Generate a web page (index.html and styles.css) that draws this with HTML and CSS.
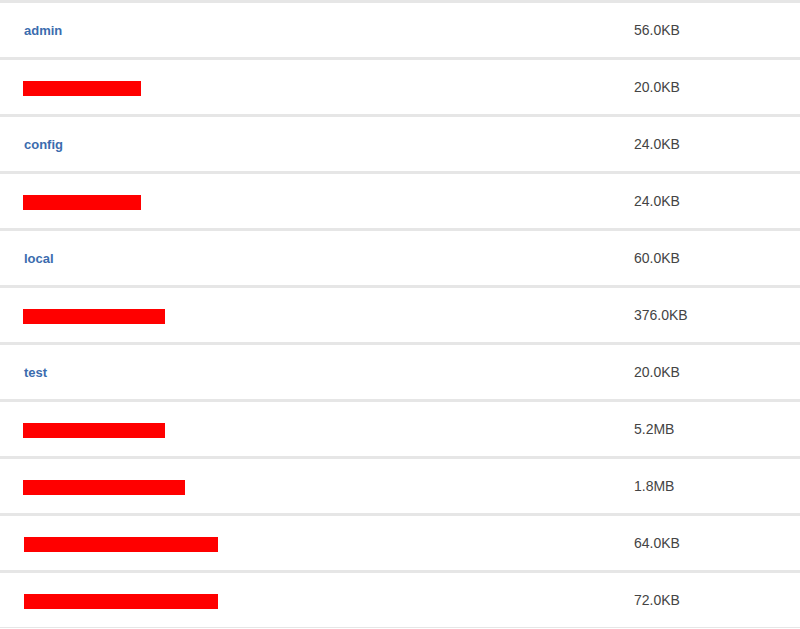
FILE: index.html
```html
<!DOCTYPE html>
<html lang="en">
<head>
  <meta charset="UTF-8">
  <title>Databases</title>
  <link rel="stylesheet" href="styles.css">
</head>
<body>
  <div class="lista">
    <div class="fila"><div class="nombre"><a href="#">admin</a></div><div class="tam">56.0KB</div></div>
    <div class="fila"><div class="nombre"><span class="tapado" style="width:118px"></span></div><div class="tam">20.0KB</div></div>
    <div class="fila"><div class="nombre"><a href="#">config</a></div><div class="tam">24.0KB</div></div>
    <div class="fila"><div class="nombre"><span class="tapado" style="width:118px"></span></div><div class="tam">24.0KB</div></div>
    <div class="fila"><div class="nombre"><a href="#">local</a></div><div class="tam">60.0KB</div></div>
    <div class="fila"><div class="nombre"><span class="tapado" style="width:142px"></span></div><div class="tam">376.0KB</div></div>
    <div class="fila"><div class="nombre"><a href="#">test</a></div><div class="tam">20.0KB</div></div>
    <div class="fila"><div class="nombre"><span class="tapado" style="width:142px"></span></div><div class="tam">5.2MB</div></div>
    <div class="fila"><div class="nombre"><span class="tapado" style="width:162px"></span></div><div class="tam">1.8MB</div></div>
    <div class="fila"><div class="nombre"><span class="tapado corrido" style="width:194px"></span></div><div class="tam">64.0KB</div></div>
    <div class="fila"><div class="nombre"><span class="tapado corrido" style="width:194px"></span></div><div class="tam">72.0KB</div></div>
  </div>
</body>
</html>
```

FILE: styles.css
```css
body {
  margin: 0;
  font-family: "Liberation Sans", Arial, sans-serif;
  background: #fff;
}

.lista {
  display: flex;
  flex-direction: column;
  gap: 3px;
  padding: 3px 0 1px;
  background: #e6e6e6;
}

.fila {
  display: flex;
  align-items: center;
  height: 54px;
  background: #fff;
}

.nombre {
  width: 634px;
  padding-left: 24px;
  box-sizing: border-box;
  display: flex;
  align-items: center;
}

.nombre a {
  color: #3b6cae;
  font-weight: bold;
  font-size: 13px;
  text-decoration: none;
}

.tapado {
  display: block;
  height: 15px;
  margin-left: -1px;
  margin-top: 2px;
  background: #ff0000;
}

.tapado.corrido {
  margin-left: 0;
}

.tam {
  font-size: 14px;
  color: #444;
}
```
